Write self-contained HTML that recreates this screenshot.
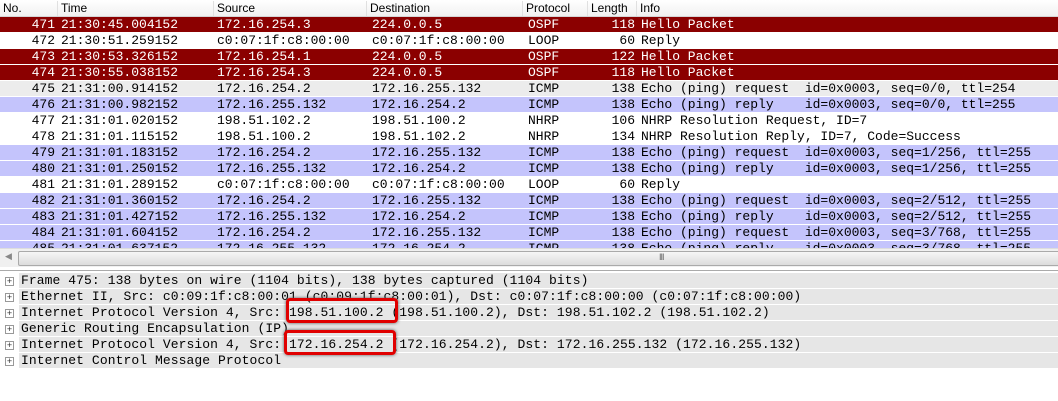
<!DOCTYPE html>
<html><head><style>
body{margin:0;width:1058px;height:400px;overflow:hidden;background:#fff;font-family:"Liberation Mono",monospace;font-size:13px;position:relative}
.hdr{position:absolute;top:0;left:0;width:1058px;height:16px;background:linear-gradient(#fff,#f1f1f1);border-bottom:1px solid #d5d5d5;font-family:"Liberation Sans",sans-serif;font-size:12px}
.hdr span{position:absolute;top:1px;border-left:1px solid #e0e0e0;padding-left:3px;height:15px}
.row{position:absolute;left:0;width:1058px;height:15px;border-bottom:1px solid #fff;line-height:15px;white-space:pre}
.row span{position:absolute;top:0}
.r{background:#8b0000;color:#fff}
.w{background:#fff;color:#000}
.g{background:#ececec;color:#000}
.b{background:#c4c4fc;color:#000}
.n{width:55px;text-align:right;left:0}
.t{left:61px}.s{left:217px}.d{left:372px}.p{left:528px}.l{left:560px;width:75px;text-align:right}.i{left:641px}
.sb{position:absolute;left:0;top:248px;width:1058px;height:18px;background:#f0f0f0;border-top:1px solid #ddd}
.thumb{position:absolute;left:18px;top:2px;width:1040px;height:13px;background:linear-gradient(#f6f6f6,#dcdcdc);border:1px solid #aaa;border-radius:2px}
.det{position:absolute;top:270px;left:0;width:1058px;height:130px;border-top:1px solid #aaa}
.dr{position:absolute;left:19px;padding-left:2px;width:1037px;height:15px;background:#e6e6e6;line-height:15px;white-space:pre;color:#000;letter-spacing:0.08px}
.pl{position:absolute;left:5px;width:7px;height:7px;border:1px solid #999;background:#fff;font-size:9px;line-height:7px;text-align:center;color:#333;font-family:"Liberation Sans",sans-serif}
.box{position:absolute;border:3px solid #e00000;border-radius:4px;box-shadow:0 0 3px #555}
</style></head><body>
<div class="hdr"><span style="left:0;border:none">No.</span><span style="left:57px">Time</span><span style="left:213px">Source</span><span style="left:366px">Destination</span><span style="left:522px">Protocol</span><span style="left:587px">Length</span><span style="left:636px">Info</span></div>

<div class="row r" style="top:17px"><span class="n">471</span><span class="t">21:30:45.004152</span><span class="s">172.16.254.3</span><span class="d">224.0.0.5</span><span class="p">OSPF</span><span class="l">118</span><span class="i">Hello Packet</span></div>
<div class="row w" style="top:33px"><span class="n">472</span><span class="t">21:30:51.259152</span><span class="s">c0:07:1f:c8:00:00</span><span class="d">c0:07:1f:c8:00:00</span><span class="p">LOOP</span><span class="l">60</span><span class="i">Reply</span></div>
<div class="row r" style="top:49px"><span class="n">473</span><span class="t">21:30:53.326152</span><span class="s">172.16.254.1</span><span class="d">224.0.0.5</span><span class="p">OSPF</span><span class="l">122</span><span class="i">Hello Packet</span></div>
<div class="row r" style="top:65px"><span class="n">474</span><span class="t">21:30:55.038152</span><span class="s">172.16.254.3</span><span class="d">224.0.0.5</span><span class="p">OSPF</span><span class="l">118</span><span class="i">Hello Packet</span></div>
<div class="row g" style="top:81px"><span class="n">475</span><span class="t">21:31:00.914152</span><span class="s">172.16.254.2</span><span class="d">172.16.255.132</span><span class="p">ICMP</span><span class="l">138</span><span class="i">Echo (ping) request  id=0x0003, seq=0/0, ttl=254</span></div>
<div class="row b" style="top:97px"><span class="n">476</span><span class="t">21:31:00.982152</span><span class="s">172.16.255.132</span><span class="d">172.16.254.2</span><span class="p">ICMP</span><span class="l">138</span><span class="i">Echo (ping) reply    id=0x0003, seq=0/0, ttl=255</span></div>
<div class="row w" style="top:113px"><span class="n">477</span><span class="t">21:31:01.020152</span><span class="s">198.51.102.2</span><span class="d">198.51.100.2</span><span class="p">NHRP</span><span class="l">106</span><span class="i">NHRP Resolution Request, ID=7</span></div>
<div class="row w" style="top:129px"><span class="n">478</span><span class="t">21:31:01.115152</span><span class="s">198.51.100.2</span><span class="d">198.51.102.2</span><span class="p">NHRP</span><span class="l">134</span><span class="i">NHRP Resolution Reply, ID=7, Code=Success</span></div>
<div class="row b" style="top:145px"><span class="n">479</span><span class="t">21:31:01.183152</span><span class="s">172.16.254.2</span><span class="d">172.16.255.132</span><span class="p">ICMP</span><span class="l">138</span><span class="i">Echo (ping) request  id=0x0003, seq=1/256, ttl=255</span></div>
<div class="row b" style="top:161px"><span class="n">480</span><span class="t">21:31:01.250152</span><span class="s">172.16.255.132</span><span class="d">172.16.254.2</span><span class="p">ICMP</span><span class="l">138</span><span class="i">Echo (ping) reply    id=0x0003, seq=1/256, ttl=255</span></div>
<div class="row w" style="top:177px"><span class="n">481</span><span class="t">21:31:01.289152</span><span class="s">c0:07:1f:c8:00:00</span><span class="d">c0:07:1f:c8:00:00</span><span class="p">LOOP</span><span class="l">60</span><span class="i">Reply</span></div>
<div class="row b" style="top:193px"><span class="n">482</span><span class="t">21:31:01.360152</span><span class="s">172.16.254.2</span><span class="d">172.16.255.132</span><span class="p">ICMP</span><span class="l">138</span><span class="i">Echo (ping) request  id=0x0003, seq=2/512, ttl=255</span></div>
<div class="row b" style="top:209px"><span class="n">483</span><span class="t">21:31:01.427152</span><span class="s">172.16.255.132</span><span class="d">172.16.254.2</span><span class="p">ICMP</span><span class="l">138</span><span class="i">Echo (ping) reply    id=0x0003, seq=2/512, ttl=255</span></div>
<div class="row b" style="top:225px"><span class="n">484</span><span class="t">21:31:01.604152</span><span class="s">172.16.254.2</span><span class="d">172.16.255.132</span><span class="p">ICMP</span><span class="l">138</span><span class="i">Echo (ping) request  id=0x0003, seq=3/768, ttl=255</span></div>
<div class="row b" style="top:241px;height:7px;overflow:hidden;border:none"><span class="n">485</span><span class="t">21:31:01.637152</span><span class="s">172.16.255.132</span><span class="d">172.16.254.2</span><span class="p">ICMP</span><span class="l">138</span><span class="i">Echo (ping) reply    id=0x0003, seq=3/768, ttl=255</span></div>

<div class="sb"><div style="position:absolute;left:5px;top:3px;font-size:9px;color:#888">&#9664;</div><div class="thumb"><div style="position:absolute;left:640px;top:0;font-size:9px;color:#666;font-family:'Liberation Sans',sans-serif;letter-spacing:-1px">III</div></div></div>

<div class="det">
<div class="pl" style="top:6px">+</div><div class="dr" style="top:2px">Frame 475: 138 bytes on wire (1104 bits), 138 bytes captured (1104 bits)</div>
<div class="pl" style="top:22px">+</div><div class="dr" style="top:18px">Ethernet II, Src: c0:09:1f:c8:00:01 (c0:09:1f:c8:00:01), Dst: c0:07:1f:c8:00:00 (c0:07:1f:c8:00:00)</div>
<div class="pl" style="top:38px">+</div><div class="dr" style="top:34px">Internet Protocol Version 4, Src: 198.51.100.2 (198.51.100.2), Dst: 198.51.102.2 (198.51.102.2)</div>
<div class="pl" style="top:54px">+</div><div class="dr" style="top:50px">Generic Routing Encapsulation (IP)</div>
<div class="pl" style="top:70px">+</div><div class="dr" style="top:66px">Internet Protocol Version 4, Src: 172.16.254.2 (172.16.254.2), Dst: 172.16.255.132 (172.16.255.132)</div>
<div class="pl" style="top:86px">+</div><div class="dr" style="top:82px">Internet Control Message Protocol</div>
</div>
<div class="box" style="left:286px;top:298px;width:106px;height:19px"></div>
<div class="box" style="left:284px;top:330px;width:106px;height:19px"></div>
</body></html>
